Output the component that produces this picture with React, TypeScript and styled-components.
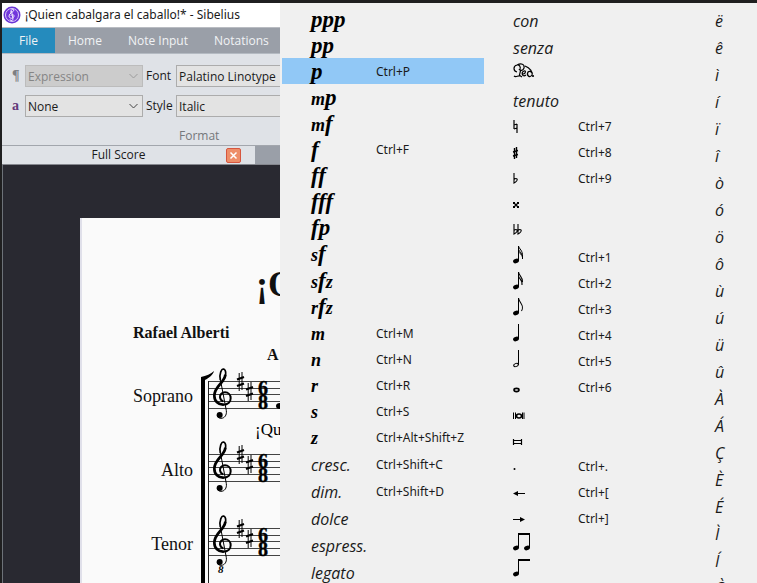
import React from "react";
import styled, { createGlobalStyle } from "styled-components";

const UI = '"Open Sans", "Noto Sans", sans-serif';
const WIDE_UI = '"Noto Sans", "Open Sans", sans-serif';
const SERIF = '"Liberation Serif", serif';

const GlobalStyle = createGlobalStyle`
  *, *::before, *::after { box-sizing: border-box; }
  body { margin: 0; background: #1b1b1f; font-family: ${UI}; color: #1a1a1a; }
  button, select { font-family: inherit; color: inherit; margin: 0; }
`;

/* ---------- application window ---------- */

const Desktop = styled.div`
  position: relative;
  height: 100vh;
  overflow: hidden;
  padding: 3px 0 0 2px;
  background: #1f1f20;
`;

const Window = styled.div`
  height: 100%;
  display: flex;
  flex-direction: column;
  background: #292931;
`;

const TitleBar = styled.header`
  display: flex;
  align-items: center;
  gap: 4px;
  height: 24px;
  padding-left: 1px;
  background: #ffffff;
  white-space: nowrap;
`;

const Title = styled.h1`
  margin: 0;
  font-family: ${WIDE_UI};
  font-size: 12px;
  font-weight: 400;
  line-height: 24px;
`;

const TabBar = styled.nav`
  display: flex;
  height: 27px;
  background: #9a9fa8;
  border-top: 1px solid #b9bcc2;
  border-bottom: 1px solid #b4bac2;
`;

const RibbonTab = styled.button<{ $file?: boolean }>`
  height: 25px;
  padding: 0 ${(p) => (p.$file ? 17 : 13)}px;
  border: 0;
  background: ${(p) => (p.$file ? "#258bbd" : "transparent")};
  color: #f1f3f5;
  font-size: 12px;
  line-height: 25px;
  white-space: nowrap;
`;

const Ribbon = styled.section`
  height: 91px;
  padding: 11px 0 0 10px;
  background: #dfe2e7;
`;

const FormatGrid = styled.div`
  display: grid;
  grid-template-columns: 10px 118px 27px 160px;
  column-gap: 3px;
  row-gap: 8px;
  align-items: center;
`;

const Mark = styled.span<{ $accent?: boolean }>`
  font-family: ${SERIF};
  font-weight: 700;
  font-size: 14px;
  line-height: 22px;
  color: ${(p) => (p.$accent ? "#63397a" : "#7d7f84")};
`;

const FieldLabel = styled.label`
  font-size: 12px;
  line-height: 22px;
`;

const SelectBox = styled.div`
  position: relative;
  display: flex;
`;

const Select = styled.select`
  appearance: none;
  width: 100%;
  height: 22px;
  padding: 0 2px;
  border: 1px solid #acacac;
  border-radius: 0;
  background: #e3e3e3;
  font-size: 12px;
  &:disabled {
    opacity: 1;
    border-color: #bcbcbc;
    background: #cccccc;
    color: #858585;
  }
`;

const Chevron = styled.svg`
  position: absolute;
  right: 5px;
  top: 7px;
  pointer-events: none;
`;

const GroupName = styled.p`
  margin: 9px 0 0 167px;
  font-size: 12px;
  line-height: 20px;
  color: #75777b;
`;

const DocTabs = styled.div`
  display: flex;
  height: 20px;
  background: #9a9fa8;
  border-top: 1px solid #a2a6ad;
  border-bottom: 1px solid #85878e;
`;

const DocTab = styled.div`
  display: flex;
  align-items: center;
  justify-content: flex-end;
  width: 253px;
  padding-right: 14px;
  background: #dfe2e7;
  font-size: 12px;
  line-height: 18px;
`;

const DocName = styled.span`
  flex: 1;
  text-align: center;
  padding-left: 9px;
`;

const CloseButton = styled.button`
  display: grid;
  place-items: center;
  width: 15px;
  height: 15px;
  padding: 0;
  border: 1px solid #d6563f;
  border-radius: 2px;
  background: #ee8e69;
`;

/* ---------- score ---------- */

const Workspace = styled.main`
  flex: 1;
  min-height: 0;
  overflow: hidden;
  padding: 53px 0 0 77px;
  border-left: 1px solid #6d7279;
`;

const Paper = styled.article`
  height: 100%;
  padding: 46px 0 0 51px;
  border-left: 2px solid #e0e0ea;
  background: #fafafa;
  color: #111;
  font-family: ${SERIF};
`;

const ScoreTitle = styled.h2`
  margin: 0 0 0 123px;
  font-size: 36px;
  line-height: 40px;
`;

const Credit = styled.p<{ $right?: boolean }>`
  margin: ${(p) => (p.$right ? "0 0 0 134px" : "18px 0 0 0")};
  font-size: 16px;
  font-weight: 700;
  line-height: 22px;
`;

const System = styled.div`
  display: flex;
  gap: 8px;
`;

const Names = styled.div`
  width: 60px;
  padding-top: 1px;
  text-align: right;
`;

const PartName = styled.div`
  height: 74px;
  padding-top: 18px;
  font-size: 18px;
  line-height: 22px;
`;

/* ---------- expression menu ---------- */

const Menu = styled.div`
  position: absolute;
  top: 3px;
  bottom: 0;
  left: 280px;
  right: 0;
  display: grid;
  grid-template-columns: 202px 204px 1fr;
  align-content: start;
  padding: 3px 2px 0;
  overflow: hidden;
  background: #f0f0f0;
`;

const Column = styled.div`
  display: flex;
  flex-direction: column;
`;

const Item = styled.button<{ $tall?: boolean; $on?: boolean; $plain?: boolean }>`
  display: grid;
  grid-template-columns: 65px 1fr;
  align-items: center;
  flex: none;
  height: ${(p) => (p.$tall ? 27 : 26)}px;
  padding: 2px 0 0 ${(p) => (p.$plain ? 27 : 29)}px;
  border: 0;
  background: ${(p) => (p.$on ? "#91c8f6" : "transparent")};
  text-align: left;
  white-space: nowrap;
`;

const Keys = styled.span`
  font-family: ${WIDE_UI};
  font-size: 12px;
  line-height: 24px;
`;

const Word = styled.span`
  font-size: 16px;
  font-style: italic;
  line-height: 24px;
`;

const Dynamic = styled.span`
  font-family: ${SERIF};
  font-size: 23px;
  font-style: italic;
  font-weight: 700;
  line-height: 24px;
  color: #000;
`;

const Small = styled.span`
  font-size: 18px;
`;

const Glyph = styled.svg`
  display: block;
  overflow: visible;
`;

/* ---------- menu data ---------- */

type Entry = { kind: "dyn" | "word" | "glyph"; text: string; keys?: string; tall?: boolean; on?: boolean };

const dyn = (text: string, keys?: string, tall = false, on = false): Entry => ({ kind: "dyn", text, keys, tall, on });
const word = (text: string, keys?: string): Entry => ({ kind: "word", text, keys, tall: true });
const glyph = (text: string, keys?: string, tall = false): Entry => ({ kind: "glyph", text, keys, tall });

const dynamics: Entry[] = [
  dyn("ppp"), dyn("pp"), dyn("p", "Ctrl+P", false, true), dyn("mp"), dyn("mf"),
  dyn("f", "Ctrl+F"), dyn("ff"), dyn("fff"), dyn("fp"), dyn("sf", undefined, true), dyn("sfz"), dyn("rfz"),
  dyn("m", "Ctrl+M"), dyn("n", "Ctrl+N"), dyn("r", "Ctrl+R"), dyn("s", "Ctrl+S"), dyn("z", "Ctrl+Alt+Shift+Z", true),
  word("cresc.", "Ctrl+Shift+C"), word("dim.", "Ctrl+Shift+D"), word("dolce"), word("espress."), word("legato"),
];

const symbols: Entry[] = [
  word("con"), word("senza"), glyph("ped"), word("tenuto"),
  glyph("natural", "Ctrl+7"), glyph("sharp", "Ctrl+8"), glyph("flat", "Ctrl+9"),
  glyph("doubleSharp"), glyph("doubleFlat"), glyph("n32", "Ctrl+1", true), glyph("n16", "Ctrl+2"),
  glyph("n8", "Ctrl+3"), glyph("n4", "Ctrl+4"), glyph("n2", "Ctrl+5"), glyph("n1", "Ctrl+6"),
  glyph("breve"), glyph("breveSquare"), glyph("dot", "Ctrl+.", true), glyph("left", "Ctrl+["),
  glyph("right", "Ctrl+]"), glyph("beamPair"), glyph("beamOpen"),
];

const accents = [..."ëêìíïîòóöôùúüûÀÁÇÈÉÌÍÒ"];

const head = <ellipse cx="3" cy="13" rx="3" ry="2.2" transform="rotate(-20 3 13)" />;
const stem = <path d="M5.500 13V-2" stroke="#000" fill="none" />;

const drawings: Record<string, React.ReactNode> = {
  ped: (
    <g fill="none" stroke="#000" strokeWidth="1.2" transform="translate(0 -1)">
      <path d="M4 9C0 8 0 3 4 2C6 1 8 4 7 6M4 2C8 0 12 1 11 5C10 8 7 8 6 6M7 6C9 9 5 11 7 13C5 12 3 15 1 13M6 12L9 14" />
      <path d="M10 11C13 11 13 7 11 8C8 9 9 15 13 12" />
      <path d="M12 3C17 5 20 9 19 12C17 15 13 13 15 9C16 8 18 8 19 10" />
      <circle cx="20" cy="13" r=".5" />
    </g>
  ),
  natural: <path d="M1 4V13M4 8V17M1 9L4 8M1 13L4 12" stroke="#000" strokeWidth="1.2" fill="none" transform="translate(0 -1)" />,
  sharp: <path d="M1.500 5V16M3.500 4V15M0 9L5 7.500M0 13L5 11.500" stroke="#000" strokeWidth="1.4" fill="none" />,
  flat: <path d="M1 4V14C3 13 5 11 4 10C3 9 1 10 1 11" stroke="#000" strokeWidth="1.1" fill="none" />,
  doubleSharp: (
    <g>
      <path d="M1 8L5 12M5 8L1 12" stroke="#000" strokeWidth="1.2" />
      <path d="M0 7h2v2h-2zM4 7h2v2h-2zM0 11h2v2h-2zM4 11h2v2h-2z" />
    </g>
  ),
  doubleFlat: (
    <path d="M1 3V13C3 12 5 10 4 9C3 8 1 9 1 10M5 3V13C7 12 9 10 8 9C7 8 5 9 5 10" stroke="#000" strokeWidth="1.1" fill="none" />
  ),
  n32: (
    <g>{head}{stem}<path d="M5.500 -2C6 1 10 2 9.500 9M5.500 1C6 4 10 5 9.500 11M5.500 4C7 6 9 6 9.500 9" stroke="#000" strokeWidth="1" fill="none" /></g>
  ),
  n16: <g>{head}{stem}<path d="M5.500 -2C6 2 10 3 9.500 8M5.500 2C6 5 10 6 9 11" stroke="#000" strokeWidth="1.100" fill="none" /></g>,
  n8: <g>{head}{stem}<path d="M5.500 -2C6 3 12 5 8.500 11" stroke="#000" strokeWidth="1.100" fill="none" /></g>,
  n4: <g>{head}{stem}</g>,
  n2: <g><ellipse cx="3" cy="13" rx="2.400" ry="1.500" fill="none" stroke="#000" transform="rotate(-25 3 13)" />{stem}</g>,
  n1: <ellipse cx="3.500" cy="12" rx="2.500" ry="1.600" fill="none" stroke="#000" strokeWidth="1.600" />,
  breve: (
    <g fill="none" stroke="#000" strokeWidth="1">
      <path d="M.5 8.500V15M2.500 8.500V15M9.500 8.500V15M11 8.500V15" />
      <ellipse cx="6" cy="12" rx="2.500" ry="2" strokeWidth="1.600" />
    </g>
  ),
  breveSquare: <path d="M.5 9V15M8.500 9V15M0 10.500H9M0 13.500H9" stroke="#000" strokeWidth="1.200" fill="none" />,
  dot: <circle cx="1.500" cy="12" r="1" />,
  left: <g><path d="M3 10.500H12" stroke="#000" /><path d="M0 10.500L5 8V13Z" /></g>,
  right: <g><path d="M0 10.500H10" stroke="#000" /><path d="M12 10.500L7 8V13Z" /></g>,
  beamPair: (
    <g>{head}<g transform="translate(11 0)">{head}</g>{stem}<path d="M16.500 13V-1" stroke="#000" fill="none" /><path d="M5 -2H17V0H5Z" /></g>
  ),
  beamOpen: <g>{head}{stem}<path d="M5 -2H17V0H5Z" /></g>,
};

function Face({ kind, text }: Entry) {
  if (kind === "word") return <Word>{text}</Word>;
  if (kind === "glyph")
    return (
      <Glyph width="20" height="20" viewBox="0 0 20 20" role="img" aria-label={text}>
        {drawings[text]}
      </Glyph>
    );
  return (
    <Dynamic>
      {[...text].map((c, i) => ("pf".includes(c) ? <React.Fragment key={i}>{c}</React.Fragment> : <Small key={i}>{c}</Small>))}
    </Dynamic>
  );
}

function ItemColumn({ entries }: { entries: Entry[] }) {
  return (
    <Column>
      {entries.map((e) => (
        <Item key={e.text} type="button" role="menuitem" $tall={e.tall} $on={e.on}>
          <Face {...e} />
          {e.keys && <Keys>{e.keys}</Keys>}
        </Item>
      ))}
    </Column>
  );
}

/* ---------- score drawing ---------- */

function SharpSign({ x, y }: { x: number; y: number }) {
  return (
    <g transform={`translate(${x} ${y})`} stroke="#000">
      <path d="M2.200 1V19M5 0V18" strokeWidth="1" />
      <path d="M0 7.500L7 5M0 14L7 11.500" strokeWidth="2.200" />
    </g>
  );
}

function Clef() {
  return (
    <g transform="translate(12 3) scale(.3333)" fill="none" stroke="#000">
      <path d="M22 36C18 16 26 2 32 3C40 6 40 22 33 34" strokeWidth="5" />
      <path d="M37 20C36 44 4 54 4 83C4 99 16 111 32 110" strokeWidth="8" />
      <path d="M30 110C46 110 53 101 53 91C53 80 45 73 36 73C26 73 20 81 21 88C22 95 26 98 31 100" strokeWidth="6" />
      <path d="M22 34L40 128C42 142 34 151 24 151C16 151 12 146 13 140" strokeWidth="3" />
      <circle cx="20" cy="141" r="9" fill="#000" stroke="none" />
    </g>
  );
}

function Staff({ y }: { y: number }) {
  return (
    <g transform={`translate(0 ${y})`}>
      <path d="M7 16.500H90M7 23.500H90M7 29.500H90M7 36.500H90M7 43.500H90" stroke="#444" />
      <Clef />
      <SharpSign x={36} y={7} />
      <SharpSign x={45} y={17} />
      <text y="30" fontFamily="Liberation Serif" fontWeight="700" fontSize="20" stroke="#000" strokeWidth=".4">
        <tspan x="57">6</tspan>
        <tspan x="57" dy="14">8</tspan>
      </text>
    </g>
  );
}

function Staves() {
  return (
    <svg width="90" height="225" viewBox="0 1 90 225" role="img" aria-label="Soprano, Alto and Tenor staves">
      <Staff y={0} />
      <Staff y={73} />
      <Staff y={147} />
      <path d="M0 226V12C5 11 10 9 13 6C12 10 8 13 4 15V226Z" />
      <path d="M7.500 16V226" stroke="#222" />
      <ellipse cx="79" cy="41" rx="4" ry="3" />
      <text x="54" y="70" fontFamily="Liberation Serif" fontSize="17">¡Qu</text>
      <text x="17" y="208" fontFamily="Liberation Serif" fontWeight="700" fontStyle="italic" fontSize="11">8</text>
    </svg>
  );
}

function AppIcon() {
  return (
    <svg width="18" height="18" viewBox="0 0 18 18" aria-hidden="true">
      <circle cx="9" cy="9" r="8.500" fill="#6a35d6" />
      <circle cx="9" cy="9" r="6.500" fill="#7136dc" stroke="#d9c9fa" strokeWidth="1" />
      <path d="M8 7C7 4 10 2 11 4C11 6 6 7 6 10C6 13 11 13 11 10C11 8 8 8 8 10M8.500 5L10 13C10 15 7 15 7 13.500" fill="none" stroke="#efe6ff" strokeWidth="1" />
    </svg>
  );
}

function Combo({ id, value, disabled, label }: { id: string; value: string; disabled?: boolean; label?: string }) {
  return (
    <SelectBox>
      <Select id={id} disabled={disabled} aria-label={label} defaultValue={value}>
        <option>{value}</option>
      </Select>
      <Chevron width="9" height="8" viewBox="0 0 9 8" aria-hidden="true">
        <path d="M.5 2L4.500 6L8.500 2" fill="none" stroke={disabled ? "#9b9b9b" : "#444"} />
      </Chevron>
    </SelectBox>
  );
}

export default function App() {
  return (
    <Desktop>
      <GlobalStyle />
      <Window>
        <TitleBar>
          <AppIcon />
          <Title>¡Quien cabalgara el caballo!* - Sibelius</Title>
        </TitleBar>
        <TabBar>
          <RibbonTab $file>File</RibbonTab>
          <RibbonTab>Home</RibbonTab>
          <RibbonTab>Note Input</RibbonTab>
          <RibbonTab>Notations</RibbonTab>
        </TabBar>
        <Ribbon>
          <FormatGrid>
            <Mark>¶</Mark>
            <Combo id="paragraph" value="Expression" label="Paragraph style" disabled />
            <FieldLabel htmlFor="font">Font</FieldLabel>
            <Combo id="font" value="Palatino Linotype" />
            <Mark $accent>a</Mark>
            <Combo id="character" value="None" label="Character style" />
            <FieldLabel htmlFor="style">Style</FieldLabel>
            <Combo id="style" value="Italic" />
          </FormatGrid>
          <GroupName>Format</GroupName>
        </Ribbon>
        <DocTabs>
          <DocTab>
            <DocName>Full Score</DocName>
            <CloseButton type="button" aria-label="Close tab">
              <svg width="9" height="9" viewBox="0 0 9 9" aria-hidden="true">
                <path d="M1.500 1.500L7.500 7.500M7.500 1.500L1.500 7.500" stroke="#fff" strokeWidth="1.500" />
              </svg>
            </CloseButton>
          </DocTab>
        </DocTabs>
        <Workspace>
          <Paper>
            <ScoreTitle>¡Q</ScoreTitle>
            <Credit>Rafael Alberti</Credit>
            <Credit $right>A</Credit>
            <System>
              <Names>
                <PartName>Soprano</PartName>
                <PartName>Alto</PartName>
                <PartName>Tenor</PartName>
              </Names>
              <Staves />
            </System>
          </Paper>
        </Workspace>
      </Window>
      <Menu role="menu" aria-label="Expression words">
        <ItemColumn entries={dynamics} />
        <ItemColumn entries={symbols} />
        <Column>
          {accents.map((c) => (
            <Item key={c} type="button" role="menuitem" $tall $plain>
              <Word>{c}</Word>
            </Item>
          ))}
        </Column>
      </Menu>
    </Desktop>
  );
}
